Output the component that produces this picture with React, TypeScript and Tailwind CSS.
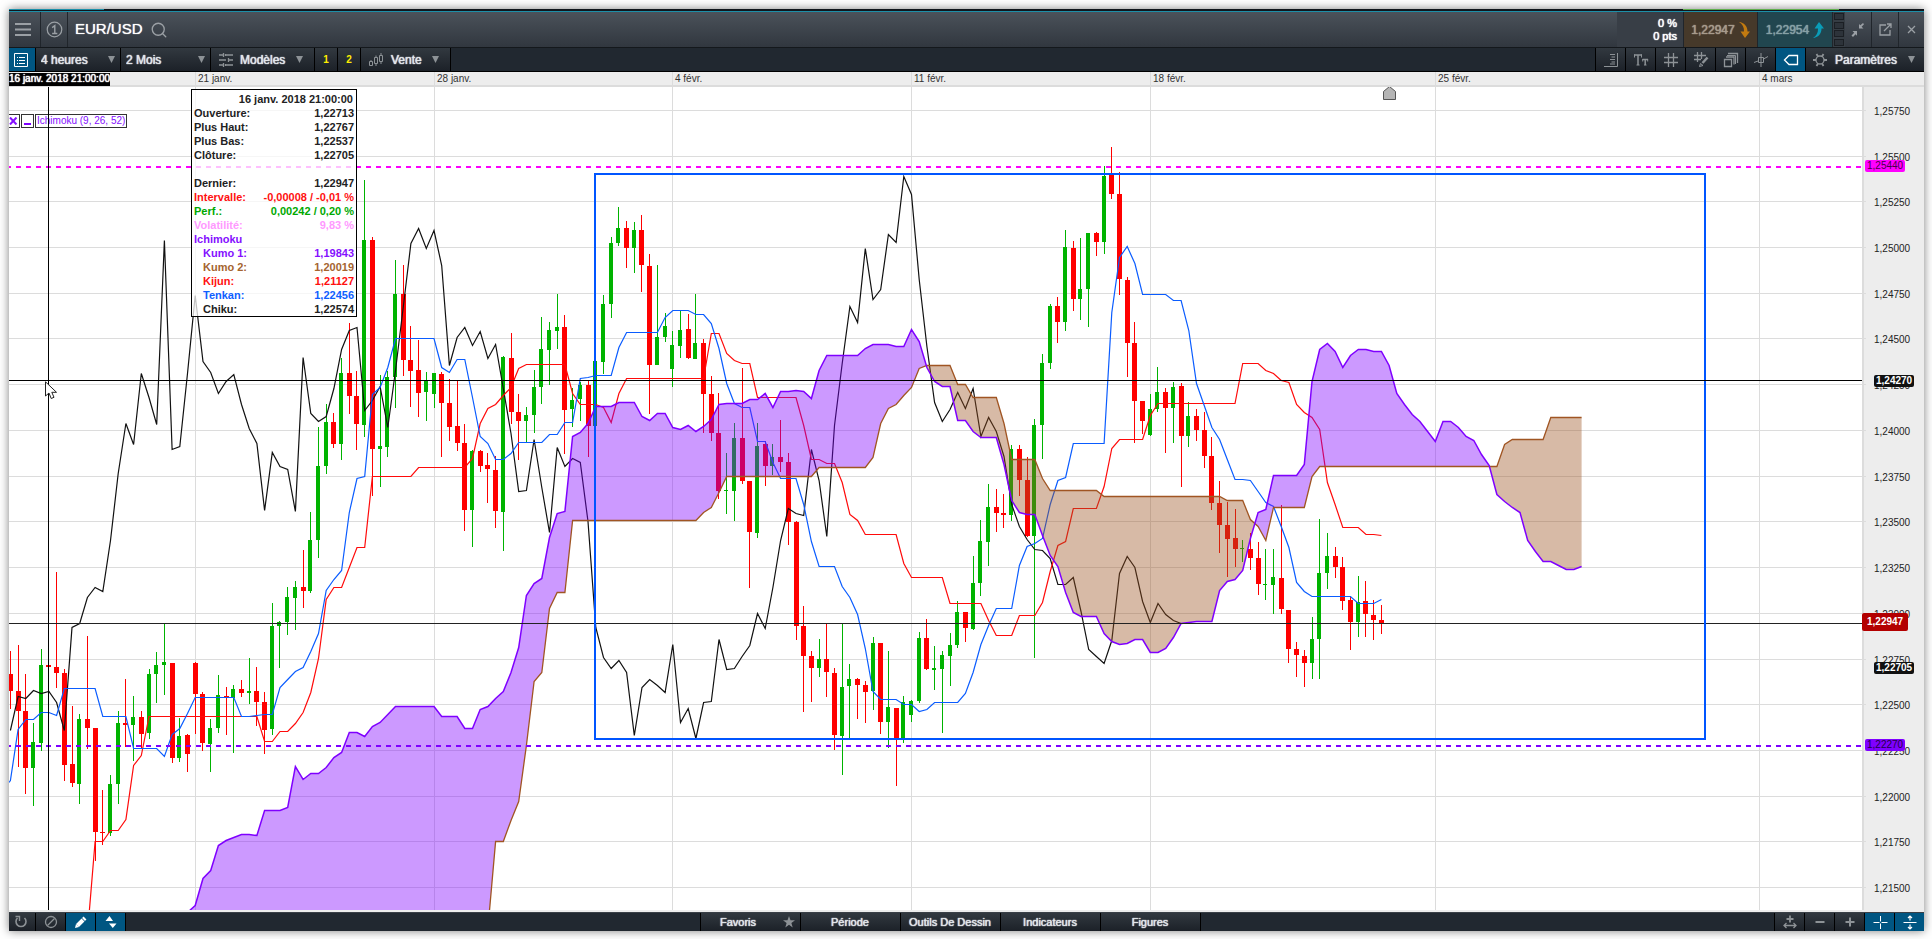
import React from "react";
import { Search } from "lucide-react";

type Candle = [dir: 0 | 1, high: number, top: number, bottom: number, low: number];

const LEFT = 9;
const TOP = 87;
const WIDTH = 1853;
const HEIGHT = 823;
const STEP = 7.702;
const FIRST = 10.4;

// Each candle: direction (1 rising, 0 falling), high, body top, body bottom, low.
const candles: Candle[] = [
  [0, 651, 674, 691, 709], [0, 645, 691, 711, 767], [0, 674, 711, 768, 794], [1, 723, 742, 768, 806],
  [1, 649, 665, 743, 751], [0, 665, 665, 667, 667], [0, 572, 667, 673, 688], [0, 669, 673, 765, 781],
  [0, 706, 764, 783, 787], [1, 714, 719, 784, 804], [0, 636, 719, 728, 749], [0, 728, 728, 832, 861],
  [0, 790, 832, 833, 845], [1, 775, 784, 833, 836], [1, 711, 723, 784, 804], [0, 679, 723, 725, 747],
  [1, 696, 717, 725, 761], [0, 711, 717, 734, 748], [1, 669, 674, 733, 739], [1, 652, 665, 674, 703],
  [1, 624, 662, 665, 695], [0, 663, 663, 758, 763], [1, 718, 736, 758, 762], [0, 734, 735, 754, 772],
  [0, 662, 663, 694, 734], [0, 692, 694, 743, 751], [1, 719, 728, 744, 772], [1, 675, 695, 728, 733],
  [0, 687, 696, 697, 735], [1, 685, 689, 698, 753], [0, 680, 689, 693, 697], [1, 658, 691, 693, 704],
  [0, 667, 691, 702, 726], [0, 692, 702, 730, 754], [1, 603, 626, 729, 735], [1, 621, 622, 626, 668],
  [1, 587, 597, 622, 635], [1, 581, 587, 598, 630], [0, 550, 587, 591, 608], [1, 512, 540, 591, 593],
  [1, 427, 466, 540, 558], [1, 404, 422, 466, 474], [0, 413, 422, 444, 448], [1, 358, 373, 444, 460],
  [0, 323, 373, 396, 414], [0, 371, 396, 424, 450], [1, 180, 240, 425, 437], [0, 237, 240, 449, 496],
  [1, 375, 446, 449, 487], [1, 371, 377, 447, 457], [1, 260, 294, 377, 408], [0, 265, 294, 360, 376],
  [0, 326, 360, 371, 407], [0, 340, 370, 393, 417], [1, 372, 380, 392, 421], [1, 373, 373, 394, 408],
  [0, 372, 374, 403, 457], [0, 379, 403, 427, 441], [0, 381, 426, 443, 451], [0, 424, 443, 510, 531],
  [1, 450, 451, 510, 547], [0, 450, 451, 466, 472], [0, 453, 465, 469, 503], [0, 456, 470, 511, 528],
  [1, 356, 357, 512, 551], [0, 333, 358, 412, 424], [0, 394, 412, 421, 460], [1, 407, 415, 421, 443],
  [1, 370, 387, 415, 433], [1, 317, 349, 387, 404], [1, 322, 330, 350, 385], [1, 294, 327, 331, 349],
  [0, 315, 327, 410, 454], [1, 388, 400, 409, 427], [1, 382, 385, 399, 421], [0, 381, 385, 426, 457],
  [1, 361, 361, 426, 426], [1, 295, 304, 362, 374], [1, 237, 243, 304, 318], [1, 207, 228, 243, 246],
  [0, 221, 228, 248, 268], [1, 222, 230, 248, 273], [0, 215, 230, 265, 292], [0, 254, 266, 365, 414],
  [1, 265, 337, 365, 365], [1, 313, 326, 337, 342], [1, 331, 345, 369, 387], [1, 311, 330, 346, 358],
  [0, 314, 329, 358, 359], [1, 294, 343, 359, 359], [0, 339, 343, 394, 433], [0, 376, 394, 433, 441],
  [0, 393, 433, 491, 499], [1, 453, 490, 491, 514], [1, 423, 438, 491, 521], [0, 368, 438, 481, 484],
  [0, 481, 481, 532, 588], [1, 423, 446, 533, 538], [0, 441, 444, 466, 486], [1, 444, 457, 466, 475],
  [0, 420, 457, 462, 472], [0, 453, 462, 522, 545], [0, 521, 522, 626, 640], [0, 606, 626, 656, 712],
  [0, 651, 656, 668, 702], [1, 639, 659, 668, 677], [0, 624, 659, 672, 697], [0, 668, 673, 735, 750],
  [1, 624, 687, 736, 775], [1, 664, 679, 686, 738], [0, 678, 679, 685, 719], [0, 681, 685, 692, 723],
  [1, 637, 643, 691, 710], [0, 643, 643, 722, 734], [1, 651, 707, 722, 748], [0, 708, 708, 739, 786],
  [1, 696, 702, 738, 743], [1, 700, 701, 715, 722], [1, 632, 638, 701, 703], [0, 619, 638, 669, 670],
  [1, 646, 668, 670, 690], [1, 651, 655, 669, 733], [1, 633, 645, 656, 686], [1, 601, 612, 645, 648],
  [0, 612, 612, 628, 642], [1, 556, 583, 629, 630], [1, 520, 541, 583, 596], [1, 484, 507, 542, 566],
  [0, 489, 507, 513, 532], [0, 494, 513, 515, 528], [1, 445, 449, 515, 521], [0, 445, 449, 480, 496],
  [0, 457, 480, 536, 537], [1, 419, 425, 536, 658], [1, 354, 363, 425, 459], [1, 304, 306, 363, 369],
  [0, 297, 306, 322, 343], [1, 230, 247, 322, 331], [0, 241, 248, 299, 311], [1, 238, 289, 299, 320],
  [1, 233, 233, 289, 327], [0, 232, 233, 242, 256], [1, 166, 176, 242, 254], [0, 147, 175, 194, 199],
  [0, 172, 194, 279, 295], [0, 277, 280, 343, 377], [0, 322, 343, 401, 443], [0, 401, 401, 421, 434],
  [1, 394, 409, 435, 436], [1, 367, 392, 409, 412], [0, 388, 392, 408, 453], [1, 382, 387, 408, 443],
  [0, 383, 386, 436, 487], [1, 402, 416, 436, 447], [0, 409, 416, 430, 441], [0, 412, 430, 456, 468],
  [0, 437, 456, 503, 510], [0, 481, 503, 525, 553], [0, 502, 525, 539, 577], [0, 509, 538, 549, 567],
  [1, 540, 548, 549, 562], [0, 533, 549, 558, 570], [0, 542, 558, 584, 595], [1, 549, 584, 585, 600],
  [1, 549, 577, 585, 614], [0, 505, 578, 609, 614], [0, 610, 610, 649, 663], [0, 642, 649, 655, 677],
  [0, 650, 656, 663, 687], [1, 617, 639, 663, 679], [1, 519, 573, 639, 679], [1, 533, 556, 573, 589],
  [0, 547, 556, 567, 578], [0, 557, 567, 601, 610], [0, 597, 600, 622, 650], [1, 576, 602, 622, 637],
  [0, 581, 601, 614, 637], [0, 600, 615, 620, 640], [0, 605, 620, 624, 634],
];

const chikou = [
  730, 696, 698, 690, 693, 691, 702, 730, 627, 623, 597, 587, 591, 540, 473, 423, 444, 373, 397, 424,
  240, 449, 446, 373, 295, 361, 372, 393, 381, 374, 404, 428, 443, 510, 452, 466, 469, 511, 357, 413,
  421, 416, 388, 349, 330, 327, 410, 400, 386, 427, 370, 307, 243, 228, 248, 230, 265, 365, 337, 327,
  345, 331, 358, 344, 388, 433, 491, 490, 439, 487, 532, 447, 466, 458, 462, 521, 627, 657, 668, 660,
  672, 735, 687, 679, 685, 692, 644, 722, 708, 738, 702, 701, 639, 669, 668, 656, 645, 613, 628, 587,
  540, 508, 513, 515, 449, 480, 536, 425, 363, 306, 322, 248, 299, 289, 234, 242, 176, 194, 279, 346,
  402, 421, 409, 392, 408, 388, 436, 417, 431, 456, 504, 526, 539, 549, 550, 558, 584, 584, 577, 611,
  649, 656, 663, 640, 573, 556, 567, 601, 622, 603, 614, 620, 623,
];

const tenkan = [
  780, 729, 719, 719, 712, 712, 715, 688, 688, 688, 688, 688, 716, 716, 716, 716, 748, 748, 748, 748,
  756, 734, 728, 713, 697, 697, 697, 697, 697, 697, 716, 716, 715, 714, 714, 687, 679, 671, 667, 651,
  633, 590, 579, 570, 512, 478, 476, 394, 387, 367, 338, 338, 338, 338, 338, 338, 367, 372, 359, 359,
  397, 436, 443, 459, 459, 453, 442, 442, 442, 442, 434, 434, 422, 422, 378, 377, 375, 375, 375, 347,
  332, 332, 332, 332, 332, 317, 310, 310, 310, 314, 314, 323, 348, 383, 403, 407, 407, 441, 441, 462,
  478, 478, 478, 504, 541, 566, 566, 566, 586, 597, 614, 648, 691, 699, 699, 699, 704, 704, 711, 709,
  702, 702, 702, 702, 693, 672, 644, 625, 608, 608, 608, 565, 546, 543, 538, 504, 480, 477, 443, 443,
  443, 443, 443, 312, 257, 246, 263, 294, 294, 294, 294, 300, 300, 330, 383, 405, 427, 439, 459, 479,
  479, 480, 491, 502, 506, 526, 547, 582, 591, 596, 596, 596, 596, 596, 596, 603, 603, 603, 599,
];

const kijun = [
  934, 841, 841, 830, 830, 819, 765, 755, 716, 716, 716, 716, 716, 716, 716, 716, 716, 716, 716, 716,
  716, 716, 716, 741, 741, 731, 731, 723, 712, 692, 658, 599, 587, 587, 567, 547, 547, 476, 476, 476,
  476, 476, 476, 467, 467, 467, 467, 467, 467, 467, 458, 423, 408, 404, 395, 387, 368, 364, 364, 364,
  364, 364, 364, 393, 404, 404, 404, 407, 422, 393, 378, 378, 378, 378, 378, 378, 378, 378, 378, 378,
  378, 333, 333, 353, 360, 363, 363, 397, 397, 397, 397, 397, 397, 425, 459, 459, 463, 463, 482, 514,
  520, 534, 534, 534, 534, 534, 563, 577, 577, 577, 577, 577, 603, 603, 603, 603, 603, 620, 635, 635,
  635, 615, 615, 615, 602, 571, 545, 541, 508, 508, 508, 508, 486, 448, 439, 439, 439, 439, 415, 403,
  403, 403, 403, 403, 403, 403, 403, 403, 403, 403, 363, 363, 363, 370, 373, 380, 382, 404, 412, 417,
  429, 482, 504, 527, 527, 527, 534, 534, 535,
];

const kumo1 = [
  912, 905, 878, 870, 845, 840, 837, 834, 834, 835, 810, 810, 810, 807, 766, 779, 773, 773, 767, 757,
  752, 732, 732, 736, 726, 722, 714, 706, 706, 706, 706, 706, 706, 716, 716, 716, 728, 728, 709, 706,
  698, 691, 672, 647, 595, 583, 578, 537, 513, 511, 436, 432, 423, 406, 406, 406, 402, 402, 402, 416,
  420, 413, 413, 427, 429, 425, 431, 426, 419, 404, 403, 403, 403, 399, 399, 393, 407, 391, 391, 390,
  391, 398, 370, 355, 355, 355, 355, 355, 348, 344, 344, 344, 346, 346, 329, 341, 367, 381, 386, 386,
  420, 420, 431, 437, 437, 437, 464, 500, 512, 514, 514, 535, 555, 566, 592, 612, 616, 616, 616, 633,
  641, 644, 643, 639, 639, 652, 652, 648, 637, 623, 622, 621, 621, 621, 590, 581, 579, 570, 538, 512,
  509, 475, 475, 475, 475, 464, 381, 349, 343, 351, 367, 355, 349, 349, 351, 351, 365, 393, 404, 414,
  421, 431, 441, 421, 421, 427, 436, 440, 454, 465, 494, 501, 507, 512, 540, 551, 561, 561, 565, 569,
  569, 566,
];
const KUMO1_START = 23;

const repeat = (value: number, count: number): number[] => Array<number>(count).fill(value);

const kumo2 = [
  928, 841, 841, 820, 801, 745, 681, 672, 608, 592, 592, ...repeat(520, 17), 512, 507, 492,
  ...repeat(476, 12), ...repeat(467, 7), 457, 423, 408, 404, 395, 387, 368, ...repeat(365, 4), 384, 384,
  ...repeat(397, 4), 423, ...repeat(459, 4), 478, ...repeat(490, 7), ...repeat(496, 16), 500, 500, 500,
  519, 526, 540, ...repeat(507, 5), 476, ...repeat(466, 24), 444, ...repeat(439, 5), ...repeat(417, 5),
];
const KUMO2_START = 62;

const xAt = (index: number) => FIRST + index * STEP;

const linePath = (values: number[], start = 0) =>
  values.map((y, i) => `${i ? "L" : "M"}${xAt(start + i).toFixed(1)} ${y + 0.5}`).join("");

// Splits the cloud into polygons wherever the two spans cross.
function cloudPolygons() {
  const purple: string[] = [];
  const brown: string[] = [];
  const last = KUMO1_START + kumo1.length - 1;
  const secondAt = (i: number) => (i < KUMO2_START ? 928 : kumo2[i - KUMO2_START]);
  let above: string[] = [];
  let below: string[] = [];
  let isPurple = true;
  const flush = () => {
    (isPurple ? purple : brown).push([...above, ...below.slice().reverse()].join(" "));
    above = [];
    below = [];
  };
  for (let i = KUMO1_START; i <= last; i++) {
    const a = kumo1[i - KUMO1_START];
    const b = secondAt(i);
    if (above.length > 0 && a < b !== isPurple) {
      const pa = kumo1[i - 1 - KUMO1_START];
      const pb = secondAt(i - 1);
      const t = (pb - pa) / (pb - pa - (b - a));
      const point = `${(xAt(i - 1) + t * STEP).toFixed(1)},${(pa + t * (a - pa) + 0.5).toFixed(1)}`;
      above.push(point);
      below.push(point);
      flush();
      isPurple = a < b;
      above.push(point);
      below.push(point);
    }
    above.push(`${xAt(i).toFixed(1)},${a + 0.5}`);
    below.push(`${xAt(i).toFixed(1)},${b + 0.5}`);
  }
  flush();
  return { purple, brown };
}

const cloud = cloudPolygons();

const priceTicks = [
  ["1,25750", 110], ["1,25500", 156], ["1,25250", 201], ["1,25000", 247], ["1,24750", 293], ["1,24500", 338],
  ["1,24250", 384], ["1,24000", 430], ["1,23750", 476], ["1,23500", 521], ["1,23250", 567], ["1,23000", 613],
  ["1,22750", 659], ["1,22500", 704], ["1,22250", 750], ["1,22000", 796], ["1,21750", 841], ["1,21500", 887],
] as const;

const dateTicks = [
  ["21 janv.", 195], ["28 janv.", 434], ["4 févr.", 672], ["11 févr.", 911],
  ["18 févr.", 1150], ["25 févr.", 1435], ["4 mars", 1759],
] as const;

const percentX = (x: number) => `${((x - LEFT) / WIDTH) * 100}%`;
const percentY = (y: number) => `${((y - TOP) / HEIGHT) * 100}%`;

const readout: [string, string, string][] = [
  ["Ouverture:", "1,22713", "text-[#222]"],
  ["Plus Haut:", "1,22767", "text-[#222]"],
  ["Plus Bas:", "1,22537", "text-[#222]"],
  ["Clôture:", "1,22705", "text-[#222]"],
  ["", "", ""],
  ["Dernier:", "1,22947", "text-[#222]"],
  ["Intervalle:", "-0,00008 / -0,01 %", "text-[#ff1010]"],
  ["Perf.:", "0,00242 / 0,20 %", "text-[#00a800]"],
  ["Volatilité:", "9,83 %", "text-[#ff99ff]"],
  ["Ichimoku", "", "text-[#8510ff]"],
  ["Kumo 1:", "1,19843", "text-[#8510ff] pl-[9px]"],
  ["Kumo 2:", "1,20019", "text-[#a5642f] pl-[9px]"],
  ["Kijun:", "1,21127", "text-[#ff1010] pl-[9px]"],
  ["Tenkan:", "1,22456", "text-[#0f60ff] pl-[9px]"],
  ["Chiku:", "1,22574", "text-[#222] pl-[9px]"],
];

function Arrow() {
  return (
    <svg width="7" height="7" viewBox="0 0 7 7" className="shrink-0" aria-hidden="true">
      <path d="M0 0H7L3.5 7Z" fill="#8d9296" />
    </svg>
  );
}

function Chart() {
  return (
    <svg
      viewBox={`${LEFT} ${TOP} ${WIDTH} ${HEIGHT}`}
      preserveAspectRatio="none"
      className="absolute inset-0 h-full w-full"
      aria-hidden="true"
    >
      <g stroke="#dcdcdc">
        {priceTicks.map(([label, y]) => (
          <line key={label} x1={LEFT} x2={LEFT + WIDTH} y1={y + 0.5} y2={y + 0.5} />
        ))}
        {dateTicks.map(([label, x]) => (
          <line key={label} x1={x + 0.5} x2={x + 0.5} y1={TOP} y2={TOP + HEIGHT} />
        ))}
      </g>
      <g shapeRendering="crispEdges">
        {candles.map(([up, high, top, bottom, low], i) => {
          const x = Math.floor(xAt(i));
          return (
            <g key={i} fill={up ? "#00b300" : "#ff0000"}>
              <rect x={x} y={high} width={1} height={Math.max(1, low - high)} />
              <rect x={x - 2} y={top} width={up ? 4 : 5} height={Math.max(1, bottom - top)} />
            </g>
          );
        })}
      </g>
      <g fill="none" strokeWidth="1.2">
        <path d={linePath(chikou)} stroke="#111" />
        <path d={linePath(kijun, 10)} stroke="#ff0a0a" />
        <path d={`M9 782.5L10.4 780.5${linePath(tenkan).replace("M", "L")}`} stroke="#0a5cff" />
      </g>
      <g fill="#7f00ff" fillOpacity="0.4">
        {cloud.purple.map((points) => (
          <polygon key={points} points={points} />
        ))}
      </g>
      <g fill="#9c5221" fillOpacity="0.4">
        {cloud.brown.map((points) => (
          <polygon key={points} points={points} />
        ))}
      </g>
      <g fill="none">
        <path d={linePath(kumo2, KUMO2_START)} stroke="#a05523" strokeWidth="1.3" />
        <path d={linePath(kumo1, KUMO1_START)} stroke="#7f00ff" strokeWidth="1.5" />
      </g>
      <line x1={LEFT} x2={LEFT + WIDTH} y1="623.5" y2="623.5" stroke="#222" />
      <line x1={LEFT - 3} x2={LEFT + WIDTH} y1="167" y2="167" stroke="#ff00ff" strokeWidth="2" strokeDasharray="5 5" />
      <line x1={LEFT - 3} x2={LEFT + WIDTH} y1="746" y2="746" stroke="#7f00ff" strokeWidth="2" strokeDasharray="5 5" />
      <rect x="595" y="174" width="1110" height="565" fill="none" stroke="#0055ff" strokeWidth="2" />
      <path d="M1383.5 99.5V91.5L1389.5 86.5L1395.5 91.5V99.5Z" fill="#b5b5b5" stroke="#555" />
    </svg>
  );
}

const cellBorder = "border-r border-black";
const barCell = "flex items-center bg-linear-to-b from-[#323940] to-[#1c2128]";
const softText = "text-[#e2e6ea] [text-shadow:0_0_1px_#e2e6ea,0_0_1px_#e2e6ea]";

function ToolIcon({ label, children, active = false }: { label: string; children: React.ReactNode; active?: boolean }) {
  return (
    <button
      type="button"
      aria-label={label}
      className={
        active
          ? "flex w-[30px] items-center justify-center border-r border-black bg-[#005682] text-white"
          : "flex w-[30px] items-center justify-center border-r border-black bg-linear-to-b from-[#323940] to-[#1c2128] text-[#8d9296]"
      }
    >
      <svg width="16" height="16" viewBox="0 0 16 16" fill="none" stroke="currentColor" aria-hidden="true">
        {children}
      </svg>
    </button>
  );
}

function Header() {
  return (
    <header className="flex h-[36px] shrink-0 items-stretch border-b border-[#14181c] bg-linear-to-b from-[#4b525a] to-[#31373f] text-[#9ba0a5]">
      <button type="button" aria-label="Menu" className="flex w-[32px] items-center justify-center border-r border-[#20252b] pr-[3px]">
        <svg width="16" height="13" viewBox="0 0 16 13" fill="currentColor" aria-hidden="true">
          <path d="M0 0H16V2H0ZM0 5.5H16V7.5H0ZM0 11H16V13H0Z" />
        </svg>
      </button>
      <button type="button" aria-label="1" className="flex w-[27px] items-center justify-center border-r border-[#20252b]">
        <svg width="17" height="17" viewBox="0 0 18 18" fill="none" stroke="currentColor" aria-hidden="true">
          <circle cx="9" cy="9" r="7.7" strokeWidth="1.3" />
          <path d="M6.5 7L9.3 5V13.5M6.5 13.3H12" strokeWidth="1.5" />
        </svg>
      </button>
      <h1 className="flex items-center pl-[7px] pr-[7px] text-[15px] text-white [text-shadow:0_0_1px_#fff]">EUR/USD</h1>
      <button type="button" aria-label="Rechercher" className="flex items-center">
        <Search size={18} strokeWidth={1.8} />
      </button>
      <div className="ml-auto flex w-[66px] flex-col items-end justify-center bg-[#383e46] pr-[6px] text-[11px] leading-[13px] text-white [text-shadow:0_0_1px_#fff,0_0_1px_#fff]">
        <span>0 %</span>
        <span>0 pts</span>
      </div>
      <button type="button" className="flex w-[75px] items-center justify-center gap-1 border-x border-[#20252b] bg-[#46392a] text-[12px] text-[#a79b8c] [text-shadow:0_0_1px_#a79b8c,0_0_1px_#a79b8c]">
        1,22947
        <svg width="11" height="16" viewBox="0 0 11 16" fill="#c27a10" aria-hidden="true">
          <path d="M0 0C5 0.5 8.5 4 8.5 9.5H11L6 16L1.5 9.5H5C5.2 5.5 3.5 2 0 0Z" />
        </svg>
      </button>
      <button type="button" className="flex w-[75px] items-center justify-center gap-1 border-r border-[#20252b] bg-[#21464f] text-[12px] text-[#86a0a5] [text-shadow:0_0_1px_#86a0a5,0_0_1px_#86a0a5]">
        1,22954
        <svg width="11" height="16" viewBox="0 0 11 16" fill="#0a9db8" aria-hidden="true">
          <path d="M0 16C5 15.5 8.5 12 8.5 6.5H11L6 0L1.5 6.5H5C5.2 10.5 3.5 14 0 16Z" />
        </svg>
      </button>
      <div className="flex w-[12px] flex-col justify-evenly bg-[#363d44] px-px">
        <span className="h-[7px] border border-[#1b1f24] bg-[#2d333a]" />
        <span className="h-[7px] border border-[#1b1f24] bg-[#2d333a]" />
        <span className="h-[7px] border border-[#1b1f24] bg-[#2d333a]" />
        <span className="h-[7px] border border-[#1b1f24] bg-[#2d333a]" />
      </div>
      <button type="button" aria-label="Réduire" className="flex w-[27px] items-center justify-center border-r border-[#20252b]">
        <svg width="14" height="14" viewBox="0 0 14 14" fill="currentColor" aria-hidden="true">
          <path d="M8 1L9.3 2.3L12 0L13 1.2L10.6 3.7L12.5 5.5H8ZM1.5 8H6V12.7L4.6 11.3L2 14L0.5 12.5L3.2 9.8Z" />
        </svg>
      </button>
      <button type="button" aria-label="Détacher" className="flex w-[27px] items-center justify-center border-r border-[#20252b]">
        <svg width="13" height="13" viewBox="0 0 13 13" fill="none" stroke="currentColor" strokeWidth="1.3" aria-hidden="true">
          <path d="M7 2H1V12H11V7M5 8L11.5 1.5M8 1H12V5" />
        </svg>
      </button>
      <button type="button" aria-label="Fermer" className="flex w-[25px] items-center justify-center">
        <svg width="9" height="9" viewBox="0 0 9 9" fill="none" stroke="currentColor" strokeWidth="1.3" aria-hidden="true">
          <path d="M1 1L8 8M8 1L1 8" />
        </svg>
      </button>
    </header>
  );
}

function Toolbar() {
  return (
    <div className="flex h-6 shrink-0 items-stretch border-b border-black bg-[#212830] text-[12px]">
      <button type="button" aria-label="Liste" className={`flex w-[27px] items-center justify-center bg-[#005682] pr-[2px] text-white ${cellBorder}`}>
        <svg width="14" height="14" viewBox="0 0 14 14" fill="none" stroke="currentColor" aria-hidden="true">
          <path d="M0.5 0.5H13.5V13.5H0.5ZM3 4.5H4M5 4.5H11M3 7.5H4M5 7.5H11M3 10.5H4M5 10.5H11" />
        </svg>
      </button>
      <label className={`w-[85px] pr-[5px] ${barCell} ${cellBorder}`}>
        <select aria-label="Intervalle" defaultValue="4 heures" className={`h-full min-w-0 flex-1 appearance-none bg-transparent pl-[5px] ${softText}`}>
          <option>4 heures</option>
        </select>
        <Arrow />
      </label>
      <label className={`w-[90px] pr-[5px] ${barCell} ${cellBorder}`}>
        <select aria-label="Période" defaultValue="2 Mois" className={`h-full min-w-0 flex-1 appearance-none bg-transparent pl-[5px] ${softText}`}>
          <option>2 Mois</option>
        </select>
        <Arrow />
      </label>
      <button type="button" className={`w-[104px] pl-2 pr-[11px] ${barCell} ${softText} ${cellBorder}`}>
        <svg width="14" height="14" viewBox="0 0 14 14" fill="none" stroke="#8d9296" strokeWidth="1.3" aria-hidden="true">
          <path d="M0 2H4M7 2H14M0 7H7M10 7H14M0 12H4M7 12H14M4.5 0V4M9.5 5V9M4.5 10V14M6.5 1V3M6.5 11V13" />
        </svg>
        <span className="ml-[7px] flex-1 text-left">Modèles</span>
        <Arrow />
      </button>
      <button type="button" className={`w-[23px] justify-center text-[10px] font-bold text-[#ffee00] ${barCell} ${cellBorder}`}>1</button>
      <button type="button" className={`w-[23px] justify-center text-[10px] font-bold text-[#ffee00] ${barCell} ${cellBorder}`}>2</button>
      <button type="button" className={`w-[90px] pl-2 pr-[11px] ${barCell} ${softText} ${cellBorder}`}>
        <svg width="15" height="14" viewBox="0 0 15 14" fill="none" stroke="#8d9296" aria-hidden="true">
          <path d="M0.5 8.5H3.5V12.5H0.5ZM5.5 4.5H8.5V10.5H5.5ZM10.5 2.5H13.5V8.5H10.5ZM2 7V8.5M7 2.5V4.5M7 10.5V13M12 0V2.5M12 8.5V11" />
        </svg>
        <span className="ml-[7px] flex-1 text-left">Vente</span>
        <Arrow />
      </button>
      <div className="ml-auto flex items-stretch border-l border-black">
        <ToolIcon label="Échelle">
          <path d="M14.5 1V14.5H1M7 2.5H12M8.5 5H12M7 7.5H12M8.5 10H12M7 12H12" />
        </ToolIcon>
        <ToolIcon label="Texte">
          <path d="M1 3H9M5 3V13M9.5 7.5H15M12.2 7.5V13" strokeWidth="1.5" />
          <path d="M1.5 2.5V5.5M8.5 2.5V5.5M3.5 13H6.5M9.7 7V9.5M14.7 7V9.5M11 13H13.5" />
        </ToolIcon>
        <ToolIcon label="Grille">
          <path d="M5.5 1V15M10.5 1V15M1 5.5H15M1 10.5H15" strokeWidth="1.3" />
        </ToolIcon>
        <ToolIcon label="Style de grille">
          <path d="M4.5 0V10M8.5 0V7M1 3.5H13M1 7.5H8" strokeWidth="1.3" />
          <path d="M14.5 5.5L9.5 11" strokeWidth="2.5" />
          <path d="M6.5 14.5L7.5 11.5L10 13.5Z" />
        </ToolIcon>
        <ToolIcon label="Calques">
          <path d="M1.5 7.5H8.5V14.5H1.5ZM3 5H11V12.5M5 1.5H14.5V11" strokeWidth="1.3" />
          <path d="M4 3.5H12.5V12" />
        </ToolIcon>
        <ToolIcon label="Chandelier">
          <path d="M1 10.5L5 9M5.5 5.5H10.5V10.5H5.5ZM8 1V15M10.5 7L15 4.5" />
        </ToolIcon>
        <ToolIcon label="Étiquette" active>
          <path d="M1.5 8L6 3.5H14.5V12.5H6Z" strokeWidth="1.3" />
        </ToolIcon>
        <button type="button" className={`w-[118px] pl-[7px] pr-[9px] ${barCell} ${softText}`}>
          <svg width="14" height="14" viewBox="0 0 14 14" fill="none" stroke="#8d9296" strokeWidth="1.3" aria-hidden="true">
            <circle cx="7" cy="7" r="4" />
            <path d="M0 7H3M11 7H14M5 3.5L3.5 1M9 3.5L10.5 1M5 10.5L3.5 13M9 10.5L10.5 13" strokeWidth="1.8" />
          </svg>
          <span className="ml-2 flex-1 text-left">Paramètres</span>
          <Arrow />
        </button>
      </div>
    </div>
  );
}

function DateAxis() {
  return (
    <div className="flex h-[15px] shrink-0 border-b-2 border-[#dcdcdc] bg-[#ededed] text-[10px] leading-[14px] text-[#333]">
      <div className="relative flex-1">
        {dateTicks.map(([label, x]) => (
          <span
            key={label}
            className="absolute top-0 h-[13px] border-l border-[#dcdcdc] pl-[2px] whitespace-nowrap"
            style={{ left: percentX(x) }}
          >
            {label}
          </span>
        ))}
        <div className="absolute left-0 top-px h-[13px] bg-black leading-[12px] whitespace-nowrap text-white [text-shadow:0_0_1px_#fff,0_0_1px_#fff]">
          16 janv. 2018 21:00:00
        </div>
      </div>
      <div className="w-[62px]" />
    </div>
  );
}

function Readout() {
  return (
    <section className="absolute left-[182px] top-[2px] w-[166px] border border-black bg-white/75 px-[2px] pt-[2px] text-[11px] leading-[14px] font-bold">
      <p className="pr-px text-right text-[#222]">16 janv. 2018 21:00:00</p>
      <dl>
        {readout.map(([name, value, tone], i) => (
          <div key={i} className={`flex h-[14px] justify-between ${tone}`}>
            <dt>{name}</dt>
            <dd className="whitespace-nowrap">{value}</dd>
          </div>
        ))}
      </dl>
    </section>
  );
}

function PriceAxis() {
  const badge = "absolute -translate-y-1/2 text-[10px]";
  return (
    <aside className="relative w-[62px] shrink-0 border-l-2 border-[#dcdcdc] bg-[#ededed] text-[10px] leading-[12px] text-[#222]">
      {priceTicks.map(([label, y]) => (
        <React.Fragment key={label}>
          <span className="absolute left-0 h-px w-[2px] bg-[#dcdcdc]" style={{ top: percentY(y) }} />
          <span className="absolute left-[10px] -translate-y-1/2" style={{ top: percentY(y + 2) }}>
            {label}
          </span>
        </React.Fragment>
      ))}
      <span className={`${badge} left-px rounded-xs bg-[#ff00ff] px-[2px] text-[#4a004a]`} style={{ top: percentY(166) }}>1,25440</span>
      <span className={`${badge} left-px rounded-xs bg-[#7f00ff] px-[2px] text-[#25004a]`} style={{ top: percentY(745) }}>1,22270</span>
      <span className={`${badge} left-[10px] rounded-xs bg-[#111] px-[2px] font-bold text-white`} style={{ top: percentY(381) }}>1,24270</span>
      <span className={`${badge} left-[10px] rounded-xs bg-[#111] px-[2px] font-bold text-white`} style={{ top: percentY(668) }}>1,22705</span>
      <span className={`${badge} -left-[2px] rounded-xs bg-[#b30000] px-[5px] py-[3px] font-bold text-white`} style={{ top: percentY(622) }}>1,22947</span>
    </aside>
  );
}

const tabClass = `relative w-[100px] justify-center text-[11px] ${barCell} ${softText} ${cellBorder}`;

function BottomBar() {
  return (
    <footer className="flex h-[19px] shrink-0 items-stretch justify-between border-t border-[#3a4047] bg-[#212830]">
      <div className="-ml-[3px] flex items-stretch">
        <ToolIcon label="Actualiser">
          <path d="M4.5 4A5 5 0 1 0 11.5 4" strokeWidth="1.6" />
          <path d="M2.5 2.5H6.500V7" strokeWidth="1.4" />
        </ToolIcon>
        <ToolIcon label="Effacer">
          <circle cx="8" cy="8" r="5.5" strokeWidth="1.3" />
          <path d="M4.500 11.500L11.500 4.500" strokeWidth="1.3" />
        </ToolIcon>
        <ToolIcon label="Crayon" active>
          <path d="M4.5 11.5L10 6" strokeWidth="4" />
          <path d="M10.5 5.5L12 4" strokeWidth="4" />
          <path d="M2 14L3 10L6 13Z" fill="currentColor" stroke="none" />
        </ToolIcon>
        <ToolIcon label="Ordre" active>
          <path d="M2.5 7L6.5 2L10 7ZM6 9.5H13.5L9.8 14Z" fill="currentColor" stroke="none" />
        </ToolIcon>
      </div>
      <nav className="flex items-stretch border-l border-black">
        <button type="button" className={tabClass}>
          <span className="mr-6">Favoris</span>
          <svg width="12" height="12" viewBox="0 0 12 12" fill="#8d9296" className="absolute right-[5px]" aria-hidden="true">
            <path d="M6 0L7.5 4.3H12L8.4 7L9.7 11.5L6 8.8L2.3 11.5L3.6 7L0 4.3H4.5Z" />
          </svg>
        </button>
        <button type="button" className={tabClass}>Période</button>
        <button type="button" className={tabClass}>Outils De Dessin</button>
        <button type="button" className={tabClass}>Indicateurs</button>
        <button type="button" className={tabClass}>Figures</button>
      </nav>
      <div className="-mr-px flex items-stretch border-l border-black">
        <ToolIcon label="Ajuster">
          <path d="M8 1.5V8.5M4.5 5H11.5" strokeWidth="1.8" />
          <path d="M2 11.5H14M4.5 9L2 11.5L4.5 14M11.5 9L14 11.5L11.5 14" strokeWidth="1.3" />
        </ToolIcon>
        <ToolIcon label="Zoom arrière">
          <path d="M3.5 8H12.5" strokeWidth="2" />
        </ToolIcon>
        <ToolIcon label="Zoom avant">
          <path d="M3.5 8H12.5M8 3.5V12.5" strokeWidth="2" />
        </ToolIcon>
        <ToolIcon label="Réticule" active>
          <path d="M1.500 8.500H7.500M9.500 8.500H15.500M8.500 2V7.500M8.500 9.500V15" />
        </ToolIcon>
        <ToolIcon label="Étirer" active>
          <path d="M1.500 8.500H14.500M8 2V6.500M8 10.500V15M6 4L8 2L10 4M6 13L8 15L10 13" strokeWidth="1.2" />
        </ToolIcon>
      </div>
    </footer>
  );
}

export default function App() {
  return (
    <div className="flex h-screen flex-col bg-white pt-[9px] pr-2 pb-2 pl-[9px] font-['Liberation_Sans',Arial,sans-serif]">
      <main className="flex min-h-0 flex-1 flex-col overflow-hidden shadow-[0_0_9px_rgba(0,0,0,0.5)]">
        <div className="flex h-[3px] shrink-0 border-b border-[#1c8fa8] bg-[#11161c]">
          <div className="h-px w-[95px] bg-[#1c8fa8]" />
          <div className="mr-[85px] ml-auto h-px w-[156px] bg-[#5fae4e]" />
        </div>
        <Header />
        <Toolbar />
        <DateAxis />
        <div className="flex min-h-0 flex-1 border-b-2 border-[#ededed]">
          <div className="relative min-w-0 flex-1 overflow-hidden bg-white">
            <Chart />
            <div className="absolute left-0 top-[27px] flex h-[14px] gap-px text-[10px] leading-[12px] text-[#8510ff]">
              <button type="button" aria-label="Retirer" className="flex w-[11px] items-center border border-l-0 border-[#333] bg-white">
                <svg width="9" height="8" viewBox="0 0 9 8" stroke="currentColor" strokeWidth="2" aria-hidden="true">
                  <path d="M1 0.5L7.5 7.5M7.5 0.5L1 7.5" />
                </svg>
              </button>
              <button type="button" aria-label="Masquer" className="flex w-[13px] items-end justify-center border border-[#333] bg-white pb-[2px]">
                <span className="h-[2px] w-[7px] bg-[#7f00ff]" />
              </button>
              <span className="border border-[#333] bg-white px-px whitespace-nowrap">Ichimoku (9, 26, 52)</span>
            </div>
            <Readout />
            <div className="absolute top-0 bottom-0 w-px bg-black" style={{ left: percentX(48) }} />
            <div className="absolute right-0 left-0 h-px bg-black" style={{ top: percentY(380) }} />
            <svg
              width="13"
              height="19"
              viewBox="0 0 13 19"
              className="absolute"
              style={{ left: percentX(45), top: percentY(381) }}
              aria-hidden="true"
            >
              <path d="M0.5 0.8V15L4 12L6.2 17.5L9 16.3L6.8 11.3H11.5Z" fill="#fff" stroke="#222" />
            </svg>
          </div>
          <PriceAxis />
        </div>
        <BottomBar />
      </main>
    </div>
  );
}
